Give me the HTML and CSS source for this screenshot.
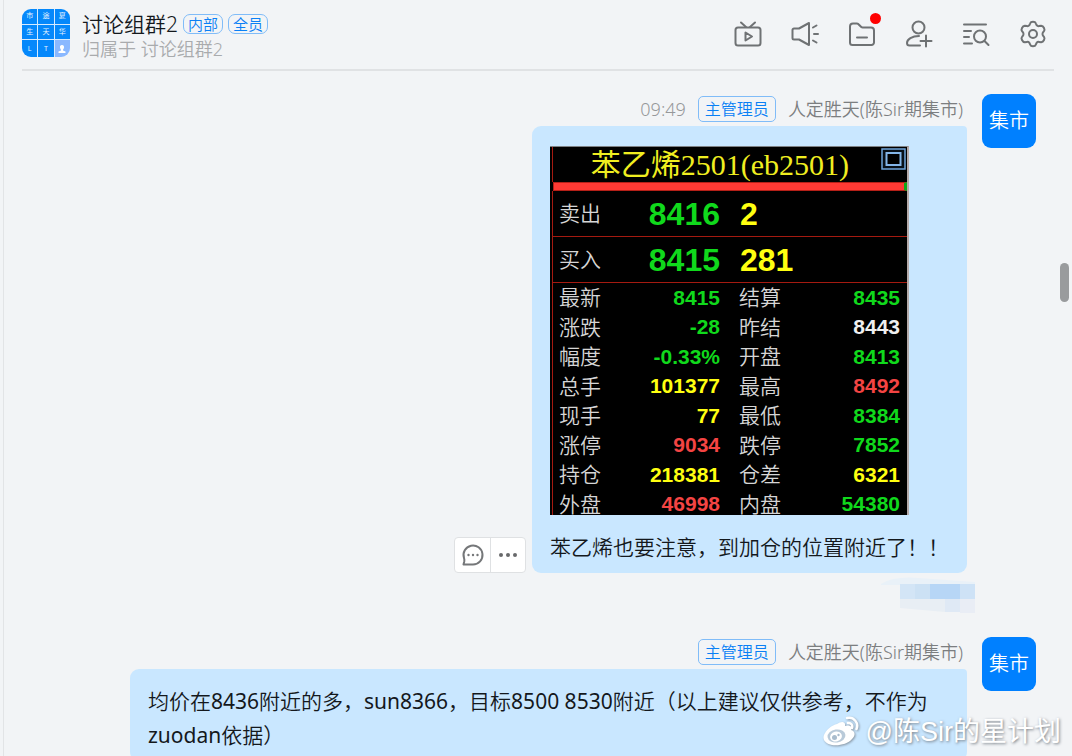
FILE: index.html
```html
<!DOCTYPE html>
<html lang="zh-CN">
<head>
<meta charset="utf-8">
<meta name="viewport" content="width=device-width, initial-scale=1">
<title>讨论组群2</title>
<link rel="stylesheet" href="styles.css">
</head>
<body>
<div class="chat">
  <header class="header">
    <div class="group-avatar" aria-hidden="true">
      <span>市</span><span>途</span><span>夏</span>
      <span>生</span><span>天</span><span>华</span>
      <span>L</span><span>T</span>
      <span class="person"><svg viewBox="0 0 10 10" width="10" height="10"><path d="M5 1C3.4 1 2.8 2.200 3 3.600c.1 1 .6 1.800 1 2.200v.7L1.500 7.600V9h7V7.600L6 6.500v-.7c.4-.4.9-1.200 1-2.200C7.200 2.200 6.600 1 5 1z" fill="#fff"/></svg></span>
    </div>
    <div class="heading">
      <div class="title-row">
        <h1 class="title">讨论组群2</h1>
        <span class="tag">内部</span>
        <span class="tag">全员</span>
      </div>
      <p class="subtitle">归属于 讨论组群2</p>
    </div>
    <nav class="tools">
      <button class="tool" type="button" aria-label="直播"><svg viewBox="0 0 28 28"><rect x="1.500" y="7.500" width="25" height="18" rx="2.500"/><path d="M7 2.500l5 4.500M21 2.500L16 7M11.500 12.500v8l6.500-4z"/></svg></button>
      <button class="tool" type="button" aria-label="公告"><svg viewBox="0 0 28 28"><path d="M3 8.500h5L18 3v22L8 19.500H3a1.500 1.500 0 0 1-1.500-1.500v-8A1.500 1.500 0 0 1 3 8.500zM22 7.500l3.500-2M23 14h4M22 20.500l3.500 2"/></svg></button>
      <button class="tool" type="button" aria-label="文件"><svg viewBox="0 0 28 28"><path d="M2 22.500v-16A3 3 0 0 1 5 3.500h4c2 0 3.500 4 5.500 4h8.500a3 3 0 0 1 3 3v12a2.500 2.500 0 0 1-2.500 2.500h-19A2.500 2.500 0 0 1 2 22.500zM9 17.500h10"/></svg><i class="dot"></i></button>
      <button class="tool" type="button" aria-label="添加成员"><svg viewBox="0 0 28 28"><circle cx="13.500" cy="7.500" r="6"/><path d="M14 16c-7 0-12 3.500-12 7 0 1.500.8 2.500 2.500 2.500H15M21 15.500v11M15.500 21h11"/></svg></button>
      <button class="tool" type="button" aria-label="搜索记录"><svg viewBox="0 0 28 28"><path d="M2 4.500h22M2 11h7M2 17h5M2 23.500h8M22.500 21l4 4"/><circle cx="18" cy="16.500" r="6"/></svg></button>
      <button class="tool" type="button" aria-label="设置"><svg viewBox="0 0 28 28"><path d="M11.200 3.300Q11.700 1.800 14 1.800T16.800 3.300L17.600 5.100Q18.500 6.300 20 6.100L22.200 5.800Q24 5.900 25 8T25 11.200L23.800 12.700Q23.200 14 23.800 15.300L25 16.800Q26 18 25 20T22.200 22.200L20 21.900Q18.500 21.700 17.600 22.900L16.800 24.700Q16.300 26.200 14 26.200T11.200 24.700L10.400 22.900Q9.500 21.700 8 21.900L5.800 22.200Q4 22.100 3 20T3 16.800L4.200 15.300Q4.800 14 4.200 12.700L3 11.200Q2 10 3 8T5.800 5.800L8 6.100Q9.500 6.300 10.400 5.100Z"/><circle cx="14" cy="14" r="4"/></svg></button>
    </nav>
  </header>

  <main class="messages">
    <article class="message">
      <div class="actions">
        <button class="action" type="button" aria-label="回复"><svg viewBox="0 0 24 24" width="24" height="24"><path d="M2.500 21.500h9.500a9.500 9.500 0 1 0-9-6.500c.4 1.200.5 2 .3 3.200z" fill="none" stroke="#757779" stroke-width="2" stroke-linejoin="round"/><g fill="#757779"><circle cx="7.500" cy="12" r="1.200"/><circle cx="12" cy="12" r="1.200"/><circle cx="16.500" cy="12" r="1.200"/></g></svg></button>
        <button class="action" type="button" aria-label="更多"><svg viewBox="0 0 24 24" width="24" height="24" fill="#68696b"><circle cx="5" cy="12" r="2"/><circle cx="12" cy="12" r="2"/><circle cx="19" cy="12" r="2"/></svg></button>
      </div>
      <div class="content">
        <div class="meta"><time class="time">09:49</time><span class="role">主管理员</span><span class="name">人定胜天(陈Sir期集市)</span></div>
        <div class="bubble">
          <section class="quote">
            <div class="quote-head">
              <h2 class="quote-title">苯乙烯2501(eb2501)</h2>
              <svg class="quote-icon" viewBox="0 0 25 22" width="25" height="22"><rect x="1" y="1" width="23" height="20" fill="#081018" stroke="#6fa5dc" stroke-width="1.500"/><rect x="5.500" y="5" width="14" height="12" fill="#000" stroke="#83b5e8" stroke-width="2"/></svg>
            </div>
            <div class="ratio"></div>
            <table class="board">
              <tbody class="orders">
                <tr><th>卖出</th><td class="up">8416</td><td class="vol" colspan="2">2</td></tr>
                <tr><th>买入</th><td class="up">8415</td><td class="vol" colspan="2">281</td></tr>
              </tbody>
              <tbody class="stats">
                <tr><th>最新</th><td class="green">8415</td><th>结算</th><td class="green">8435</td></tr>
                <tr><th>涨跌</th><td class="green">-28</td><th>昨结</th><td class="white">8443</td></tr>
                <tr><th>幅度</th><td class="green">-0.33%</td><th>开盘</th><td class="green">8413</td></tr>
                <tr><th>总手</th><td class="yellow">101377</td><th>最高</th><td class="red">8492</td></tr>
                <tr><th>现手</th><td class="yellow">77</td><th>最低</th><td class="green">8384</td></tr>
                <tr><th>涨停</th><td class="red">9034</td><th>跌停</th><td class="green">7852</td></tr>
                <tr><th>持仓</th><td class="yellow">218381</td><th>仓差</th><td class="yellow">6321</td></tr>
                <tr><th>外盘</th><td class="red">46998</td><th>内盘</th><td class="green">54380</td></tr>
              </tbody>
            </table>
          </section>
          <p class="text">苯乙烯也要注意，到加仓的位置附近了！！</p>
        </div>
      </div>
      <div class="avatar">集市</div>
    </article>

    <svg class="receipt" viewBox="0 0 95 37" width="95" height="37" aria-hidden="true">
      <path d="M1 7Q14-1 38 1l57 4v3H1z" fill="#e9f1f8"/>
      <g shape-rendering="crispEdges"><path d="M20 7h15v15H20z" fill="#d3e5f6"/><path d="M35 7h15v15H35z" fill="#cce1f4"/><path d="M50 7h30v15H50z" fill="#b7d6f6"/><path d="M80 7h15v15H80z" fill="#cee2f6"/><path d="M65 22h15v13H65z" fill="#dfe9f5"/><path d="M80 22h15v14H80z" fill="#e9edf5"/></g>
      <path d="M20 22h45v13L20 31z" fill="#e8eef4"/>
    </svg>

    <article class="message">
      <div class="content">
        <div class="meta"><span class="role">主管理员</span><span class="name">人定胜天(陈Sir期集市)</span></div>
        <div class="bubble">
          <p class="text">均价在8436附近的多，sun8366，目标8500 8530附近（以上建议仅供参考，不作为zuodan依据）</p>
        </div>
      </div>
      <div class="avatar">集市</div>
    </article>
  </main>

  <div class="scroll-thumb"></div>
  <div class="watermark">
    <svg viewBox="0 0 38 32" width="38" height="32"><path d="M15 8c4-3 9-3 8 2 4-1.500 8 0 6 4 4 1 5 5 1 9-4 5-13 7-20 6C4 28 0 24 2 19 4 14 10 9 15 8z" fill="#fff"/><ellipse cx="14.500" cy="20" rx="9" ry="6.500" fill="#b9cad9" transform="rotate(-8 14.500 20)"/><ellipse cx="14" cy="20.500" rx="6" ry="5" fill="#fff" transform="rotate(-15 14 20.500)"/><circle cx="12.500" cy="21.500" r="2.500" fill="#a9bccd"/><circle cx="16.500" cy="19" r="1.200" fill="#a9bccd"/><path d="M25 2c7-1.500 12 5 9.500 11M26 7c3-.5 5 2 4 5" fill="none" stroke="#fff" stroke-width="2.500" stroke-linecap="round"/></svg>
    <span>@陈Sir的星计划</span>
  </div>
</div>
</body>
</html>
```
FILE: styles.css
```css
* {
  box-sizing: border-box;
}

body {
  margin: 0;
  background: #f2f4f6;
  color: #14181c;
  font-family: "Noto Sans", "Noto Sans CJK SC", sans-serif;
  font-weight: 350;
}

h1, h2, p {
  margin: 0;
  font-weight: inherit;
}

button {
  padding: 0;
  border: 0;
  background: none;
}

.chat {
  position: relative;
  height: 100vh;
  margin-left: 3px;
  border-left: 1px solid #e2e4e6;
  overflow: hidden;
}

.header {
  display: flex;
  align-items: flex-start;
  margin: 0 18px;
  padding: 9px 7px 10px 0;
  border-bottom: 2px solid #e0e2e4;
}

.group-avatar {
  display: grid;
  grid-template-columns: repeat(3, 1fr);
  gap: 1px;
  width: 48px;
  height: 48px;
  margin-right: 12px;
  border-radius: 9px;
  background: #d5eaff;
  overflow: hidden;
}

.group-avatar span {
  display: flex;
  align-items: center;
  justify-content: center;
  background: #0588fb;
  color: #e6f3ff;
  font-size: 7px;
  font-weight: 400;
  line-height: 8px;
}

.group-avatar .person {
  background: #8ab8ff;
}

.title-row {
  display: flex;
  align-items: center;
  gap: 5px;
  height: 30px;
}

.title {
  font-size: 21px;
  line-height: 28px;
}

.tag {
  height: 20px;
  padding: 0 4px;
  border: 1px solid #80bcf8;
  border-radius: 7px;
  color: #0a80f5;
  font-size: 15px;
  line-height: 18px;
}

.subtitle {
  color: #a9abad;
  font-size: 18px;
  line-height: 20px;
}

.tools {
  display: flex;
  gap: 29px;
  margin: 11px 0 0 auto;
}

.tool {
  position: relative;
  width: 28px;
  height: 28px;
}

.tool svg {
  display: block;
  fill: none;
  stroke: #6f7274;
  stroke-width: 2;
  stroke-linecap: round;
  stroke-linejoin: round;
}

.dot {
  position: absolute;
  top: -7px;
  right: -5px;
  width: 11px;
  height: 11px;
  border-radius: 50%;
  background: #f00;
}

.messages {
  display: flex;
  flex-direction: column;
  padding: 23px 36px 0 18px;
}

.message {
  display: flex;
  align-items: flex-start;
  justify-content: flex-end;
}

.content {
  max-width: 837px;
}

.meta {
  display: flex;
  align-items: center;
  justify-content: flex-end;
  height: 32px;
  padding: 0 4px 3px 0;
  color: #7c7e80;
  font-size: 18px;
  line-height: 28px;
}

.time {
  margin-right: 12px;
  color: #96989a;
}

.role {
  margin-right: 12px;
  padding: 0 6px;
  border: 1px solid #80bcf8;
  border-radius: 5px;
  color: #0a80f5;
  font-size: 16px;
  line-height: 24px;
}

.bubble {
  padding: 15px 18px 9px;
  border-radius: 9px 4px 9px 9px;
  background: #c9e7ff;
}

.text {
  font-family: "Noto Sans", "Noto Sans CJK SC DemiLight", "Noto Sans CJK SC", sans-serif;
  font-size: 21px;
  font-weight: 400;
  line-height: 34px;
}

.avatar {
  flex: none;
  width: 54px;
  height: 54px;
  margin-left: 15px;
  border-radius: 9px;
  background: #0080ff;
  color: #fff;
  font-size: 20px;
  line-height: 54px;
  text-align: center;
}

.actions {
  display: flex;
  align-self: flex-end;
  margin-right: 6px;
  border: 1px solid #dfe1e3;
  border-radius: 4px;
  background: #fff;
}

.action {
  display: flex;
  align-items: center;
  justify-content: center;
  width: 35px;
  height: 34px;
}

.action + .action {
  border-left: 1px solid #dfe1e3;
}

.quote {
  width: 359px;
  height: 369px;
  margin: 5px 0 15px;
  padding-left: 2px;
  border-top: 1px solid #7e8184;
  border-right: 2px solid #b5aaa9;
  background: #000;
  overflow: hidden;
}

.quote-head {
  display: flex;
  align-items: flex-start;
  justify-content: flex-end;
  gap: 32px;
  height: 35px;
  border-left: 1px solid #a51a10;
}

.quote-title {
  color: #f0ee20;
  font-family: "Liberation Serif", "Noto Sans CJK SC", serif;
  font-size: 30px;
  font-weight: 400;
  line-height: 35px;
}

.quote-icon {
  margin: 1px 1px 0 0;
}

.ratio {
  height: 9px;
  margin-left: 1px;
  border: 1px solid #b52018;
  border-right: 3px solid #10a818;
  background: #ff3a34;
}

.board {
  width: 100%;
  border-collapse: separate;
  border-spacing: 0;
  border-left: 1px solid #a51a10;
  table-layout: fixed;
  color: #d6d6d6;
  font-size: 21px;
  line-height: 28px;
}

.board th {
  padding: 0 0 1px 6px;
  font-weight: 350;
  text-align: left;
}

.board th:nth-child(3) {
  padding-left: 9px;
}

.board td {
  padding: 0 7px 0 0;
  font-family: "Liberation Sans", sans-serif;
  font-weight: 700;
  text-align: right;
}

.orders th,
.orders td {
  height: 46px;
  border-bottom: 1px solid #a51a10;
}

.orders td {
  font-size: 32px;
}

.board td:nth-child(2) {
  padding-right: 10px;
}

.orders .vol {
  padding-left: 10px;
  text-align: left;
}

.stats tr {
  height: 29px;
}

.stats tr:nth-child(even) {
  height: 30px;
}

.up, .green {
  color: #10d91c;
}

.vol, .yellow {
  color: #ffff10;
}

.red {
  color: #f44443;
}

.white {
  color: #f0f0f0;
}

.receipt {
  align-self: flex-end;
  margin: 4px 61px 23px 0;
}

.scroll-thumb {
  position: absolute;
  top: 263px;
  right: 3px;
  width: 9px;
  height: 39px;
  border-radius: 5px;
  background: #999b9d;
}

.watermark {
  position: absolute;
  right: 11px;
  bottom: 6px;
  display: flex;
  align-items: center;
  gap: 6px;
  color: #fff;
  font-family: "Liberation Sans", "Noto Sans CJK SC", sans-serif;
  font-size: 27px;
  font-weight: 400;
  line-height: 36px;
  text-shadow: 1px 1px 3px #777f88;
}

.watermark svg {
  filter: drop-shadow(1px 1px 1px #8896a4);
}
```
